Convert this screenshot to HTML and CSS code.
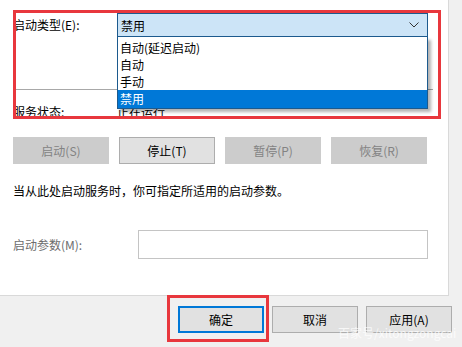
FILE: index.html
```html
<!DOCTYPE html>
<html lang="zh-CN">
<head>
    <meta charset="UTF-8">
    <title>服务属性</title>
    <link rel="stylesheet" href="styles.css">
</head>
<body>
    <div class="dialog">
        <div class="panel">
            <div class="row type-row">
                <span class="label">启动类型(E):</span>
                <div class="select">
                    <span>禁用</span>
                    <svg class="chevron" width="10" height="6" viewBox="0 0 10 6">
                        <path d="M0.5 0.5 L5 5 L9.5 0.5" fill="none" stroke="#333" stroke-width="1"/>
                    </svg>
                </div>
            </div>

            <div class="separator"></div>

            <div class="row status-row">
                <span class="label">服务状态:</span>
                <span>正在运行</span>
            </div>

            <div class="buttons">
                <button class="btn disabled">启动(S)</button>
                <button class="btn">停止(T)</button>
                <button class="btn disabled">暂停(P)</button>
                <button class="btn disabled">恢复(R)</button>
            </div>

            <p class="hint">当从此处启动服务时，你可指定所适用的启动参数。</p>

            <div class="row param-row">
                <span class="label muted">启动参数(M):</span>
                <div class="input"></div>
            </div>

            <ul class="dropdown">
                <li>自动(延迟启动)</li>
                <li>自动</li>
                <li>手动</li>
                <li class="selected">禁用</li>
            </ul>
        </div>

        <div class="footer">
            <button class="btn dlg default">确定</button>
            <button class="btn dlg">取消</button>
            <button class="btn dlg">应用(A)</button>
        </div>

        <!-- annotation boxes from the screenshot -->
        <div class="mark mark-type"></div>
        <div class="mark mark-ok"></div>
        <div class="watermark">百家号/xitongzongcai</div>
    </div>
</body>
</html>
```

FILE: styles.css
```css
body {
    margin: 0;
    padding: 0;
    background: #f0f0f0;
    font-family: "Noto Sans CJK SC", "Microsoft YaHei", sans-serif;
    font-size: 12px;
    color: #000;
}
.dialog {
    position: relative;
    width: 462px;
    height: 347px;
    overflow: hidden;
}
.panel {
    position: relative;
    box-sizing: border-box;
    width: 449px;
    height: 296px;
    padding: 13px 0 0 13px;
    background: #fff;
    border-right: 1px solid #d9d9d9;
    border-bottom: 1px solid #d9d9d9;
}
.row {
    display: flex;
    align-items: center;
}
.label {
    width: 104px;
    flex-shrink: 0;
    line-height: 16px;
}
.muted {
    color: #6d6d6d;
}
.type-row {
    height: 24px;
}
.select {
    box-sizing: border-box;
    width: 311px;
    height: 24px;
    display: flex;
    align-items: center;
    justify-content: space-between;
    padding: 0 8px 0 3px;
    background: #cce4f7;
    border: 1px solid #1c5a8e;
}
.separator {
    margin-top: 52px;
    height: 1px;
    width: 420px;
    background: #a8a8a8;
}
.status-row {
    margin-top: 14px;
    height: 16px;
    line-height: 16px;
}
.buttons {
    display: flex;
    gap: 10px;
    margin-top: 17px;
}
.btn {
    box-sizing: border-box;
    width: 96px;
    height: 27px;
    padding: 0;
    font-family: inherit;
    font-size: 12px;
    color: #000;
    background: #e1e1e1;
    border: 1px solid #adadad;
}
.btn.disabled {
    background: #cccccc;
    border-color: #cccccc;
    color: #838383;
}
.hint {
    margin: 19px 0 0;
    line-height: 16px;
}
.param-row {
    margin-top: 31px;
    height: 29px;
}
.param-row .label {
    width: 125px;
}
.input {
    box-sizing: border-box;
    width: 290px;
    height: 29px;
    border: 1px solid #c4c4c4;
}
.dropdown {
    position: absolute;
    top: 37px;
    left: 117px;
    box-sizing: border-box;
    width: 311px;
    margin: 0;
    padding: 2px 0 0;
    list-style: none;
    background: #fff;
    border: 1px solid #1c5a8e;
    border-top: none;
    box-shadow: 3px 3px 3px rgba(0, 0, 0, 0.3);
}
.dropdown li {
    height: 17px;
    line-height: 17px;
    padding-left: 2px;
}
.dropdown li.selected {
    height: 18px;
    background: #0078d7;
    color: #fff;
}
.footer {
    display: flex;
    justify-content: flex-end;
    gap: 8px;
    padding: 10px 10px 0 0;
}
.btn.dlg {
    width: 86px;
}
.btn.default {
    border: 2px solid #0078d7;
}
.mark {
    position: absolute;
    border: 3px solid #e8373d;
    pointer-events: none;
}
.mark-type {
    left: 13px;
    top: 10px;
    width: 422px;
    height: 103px;
}
.mark-ok {
    left: 167px;
    top: 295px;
    width: 96px;
    height: 41px;
}
.watermark {
    position: absolute;
    left: 338px;
    top: 326px;
    font-size: 12px;
    line-height: 14px;
    color: rgba(255, 255, 255, 0.75);
    white-space: nowrap;
}
```
